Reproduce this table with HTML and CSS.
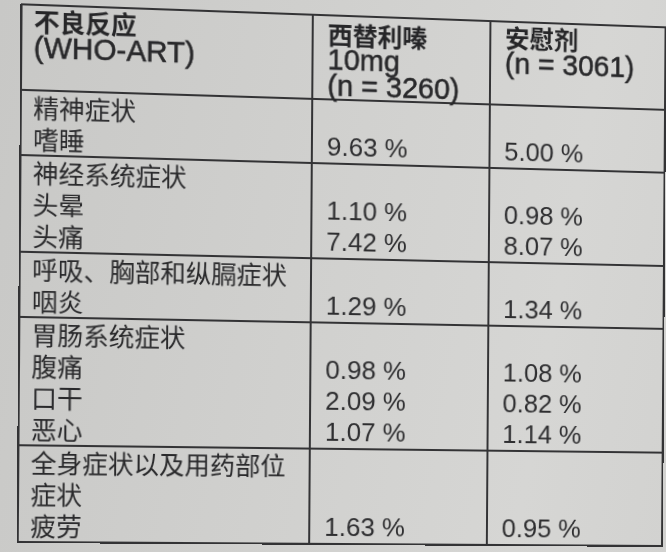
FILE: index.html
```html
<!DOCTYPE html>
<html lang="zh-CN">
<head>
<meta charset="utf-8">
<title>不良反应</title>
<link rel="stylesheet" href="styles.css">
</head>
<body>
<div class="page">
  <table class="ae">
    <colgroup>
      <col class="c-term">
      <col class="c-drug">
      <col class="c-plac">
    </colgroup>
    <thead>
      <tr class="head">
        <th class="term"><div class="hl zh">不良反应</div><div class="hl lat">(WHO-ART)</div></th>
        <th class="val drug"><div class="hl zh">西替利嗪</div><div class="hl lat">10mg</div><div class="hl lat">(n = 3260)</div></th>
        <th class="val"><div class="hl zh">安慰剂</div><div class="hl lat">(n = 3061)</div></th>
      </tr>
    </thead>
    <tbody>
      <tr>
        <td class="term"><div class="ln">精神症状</div><div class="ln">嗜睡</div></td>
        <td class="val"><div class="ln"></div><div class="ln num">9.63 %</div></td>
        <td class="val"><div class="ln"></div><div class="ln num">5.00 %</div></td>
      </tr>
      <tr>
        <td class="term"><div class="ln">神经系统症状</div><div class="ln">头晕</div><div class="ln">头痛</div></td>
        <td class="val"><div class="ln"></div><div class="ln num">1.10 %</div><div class="ln num">7.42 %</div></td>
        <td class="val"><div class="ln"></div><div class="ln num">0.98 %</div><div class="ln num">8.07 %</div></td>
      </tr>
      <tr>
        <td class="term"><div class="ln">呼吸、胸部和纵膈症状</div><div class="ln">咽炎</div></td>
        <td class="val"><div class="ln"></div><div class="ln num">1.29 %</div></td>
        <td class="val"><div class="ln"></div><div class="ln num">1.34 %</div></td>
      </tr>
      <tr>
        <td class="term"><div class="ln">胃肠系统症状</div><div class="ln">腹痛</div><div class="ln">口干</div><div class="ln">恶心</div></td>
        <td class="val"><div class="ln"></div><div class="ln num">0.98 %</div><div class="ln num">2.09 %</div><div class="ln num">1.07 %</div></td>
        <td class="val"><div class="ln"></div><div class="ln num">1.08 %</div><div class="ln num">0.82 %</div><div class="ln num">1.14 %</div></td>
      </tr>
      <tr>
        <td class="term"><div class="ln">全身症状以及用药部位</div><div class="ln">症状</div><div class="ln">疲劳</div></td>
        <td class="val"><div class="ln"></div><div class="ln"></div><div class="ln num">1.63 %</div></td>
        <td class="val"><div class="ln"></div><div class="ln"></div><div class="ln num">0.95 %</div></td>
      </tr>
    </tbody>
  </table>
</div>
</body>
</html>
```

FILE: styles.css
```css
html, body {
  margin: 0;
  height: 100%;
}

body {
  background: linear-gradient(100deg, #c8c8c6 0%, #d0d0ce 45%, #d6d6d4 80%, #d2d2d0 100%);
  color: #29292b;
  font-family: "Liberation Sans", "Noto Sans CJK SC", sans-serif;
  overflow: hidden;
}

.page {
  padding: 15px 0 0 24px;
}

.ae {
  border-collapse: collapse;
  table-layout: fixed;
  width: 645px;
  transform: perspective(1000px) rotateY(3.2deg) rotate(0.4deg) skewY(0.8deg);
}

.c-term { width: 286px; }
.c-drug { width: 179px; }
.c-plac { width: 180px; }

.ae th,
.ae td {
  border: 2px solid #333335;
  vertical-align: top;
  text-align: left;
  padding: 0 0 0 14px;
}

.ae .term {
  padding-left: 11px;
}

.head th {
  padding-top: 1px;
  padding-bottom: 0;
  font-weight: normal;
}

.head th.drug {
  padding-top: 4px;
}

.hl {
  height: 27px;
  line-height: 27px;
  white-space: nowrap;
}

.head th.drug .hl {
  height: 26px;
  line-height: 26px;
}

.hl.zh {
  font-family: "Noto Sans CJK SC", sans-serif;
  font-size: 25px;
  font-weight: 700;
  color: #262628;
}

.hl.lat {
  font-size: 29px;
  -webkit-text-stroke: 0.5px #262628;
}

.ln {
  height: 31px;
  line-height: 31px;
  white-space: nowrap;
  font-family: "Noto Sans CJK SC", sans-serif;
  font-size: 25px;
}

.ln.num {
  font-family: "Liberation Sans", sans-serif;
  font-size: 26px;
  color: #2e2e30;
}
```
